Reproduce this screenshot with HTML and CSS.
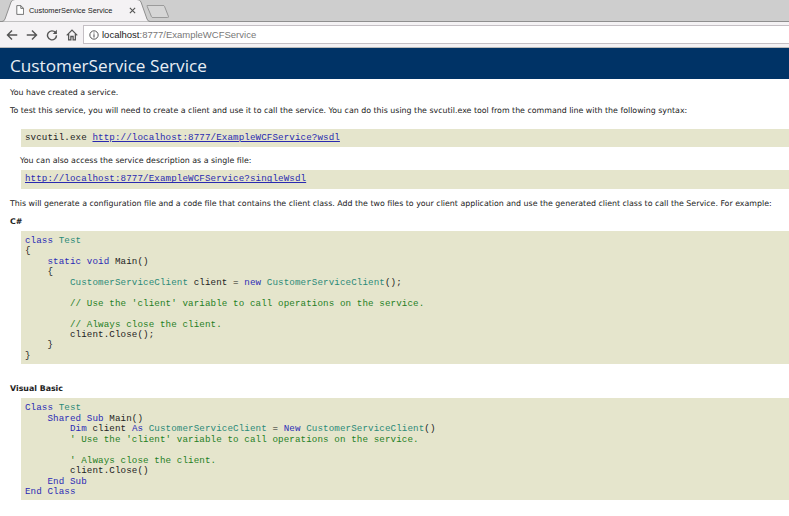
FILE: index.html
```html
<!DOCTYPE html>
<html lang="en">
<head>
  <meta charset="UTF-8">
  <meta name="viewport" content="width=device-width, initial-scale=1.0">
  <title>CustomerService Service</title>
  <link rel="stylesheet" href="styles.css">
</head>
<body>
  <!-- browser chrome -->
  <div class="tab-strip">
    <div class="tab">
      <svg class="tab-shape" width="152" height="23" viewBox="0 0 152 23">
        <path d="M0 22.5 H2 Q4 22.5 5 20 L11 3 Q12 .5 15 .5 H137 Q140 .5 141 3 L147 20 Q148 22.5 150 22.5 H152" fill="#f4f2f4" stroke="#8f8f8f"/>
      </svg>
      <svg class="tab-page" width="8" height="10" viewBox="0 0 10 12">
        <path d="M1 .5 H6 L9.5 4 V11.5 H1 Z M6 .5 V4 H9.5" fill="#fff" stroke="#555"/>
      </svg>
      <span class="tab-title">CustomerService Service</span>
      <svg class="tab-close" width="7" height="7" viewBox="0 0 8 8">
        <path d="M1 1 L7 7 M7 1 L1 7" stroke="#555" stroke-width="1.3"/>
      </svg>
    </div>
    <svg class="new-tab" width="24" height="13" viewBox="0 0 26 15">
      <path d="M.5 .5 H19 Q20 .5 20.5 1.5 L25 13 Q25.5 14.5 24 14.5 H7 Q6 14.5 5.5 13.5 L.7 2 Q.2 .5 .5 .5 Z" fill="#d6d6d6" stroke="#8c8c8c"/>
    </svg>
  </div>
  <div class="toolbar">
    <svg class="nav-icon" width="12" height="12" viewBox="0 0 16 16">
      <path d="M15 8 H3 M8 2 L2 8 L8 14" fill="none" stroke="#555" stroke-width="1.9"/>
    </svg>
    <svg class="nav-icon" width="12" height="12" viewBox="0 0 16 16">
      <path d="M1 8 H13 M8 2 L14 8 L8 14" fill="none" stroke="#555" stroke-width="1.9"/>
    </svg>
    <svg class="nav-icon" width="12" height="12" viewBox="0 0 16 16">
      <path d="M12.6 4.6 A6 6 0 1 0 14 8.5" fill="none" stroke="#555" stroke-width="1.9"/>
      <path d="M14.5 1 V6.5 H9 Z" fill="#555"/>
    </svg>
    <svg class="nav-icon" width="12" height="12" viewBox="0 0 16 16">
      <path d="M1 8.5 L8 1.5 L15 8.5 M3.5 6.5 V14.5 H6.5 V10 H9.5 V14.5 H12.5 V6.5" fill="none" stroke="#555" stroke-width="1.7"/>
    </svg>
    <div class="address-bar">
      <svg class="info-icon" width="10" height="10" viewBox="0 0 12 12">
        <circle cx="6" cy="6" r="5" fill="none" stroke="#555" stroke-width="1.2"/>
        <path d="M6 5 V9 M6 3 V4.2" stroke="#555" stroke-width="1.3"/>
      </svg>
      <span class="url-host">localhost</span><span class="url-rest">:8777/ExampleWCFService</span>
    </div>
  </div>

  <!-- service page -->
  <div class="content">
    <div class="heading">CustomerService Service</div>
    <div class="body-text">
      <p class="intro">You have created a service.</p>
      <p class="para">To test this service, you will need to create a client and use it to call the service. You can do this using the svcutil.exe tool from the command line with the following syntax:</p>
      <pre class="code-box short">svcutil.exe <a href="#">http://localhost:8777/ExampleWCFService?wsdl</a></pre>
      <p class="indented">You can also access the service description as a single file:</p>
      <pre class="code-box short"><a href="#">http://localhost:8777/ExampleWCFService?singleWsdl</a></pre>
      <p class="para generate">This will generate a configuration file and a code file that contains the client class. Add the two files to your client application and use the generated client class to call the Service. For example:</p>
      <p class="lang">C#</p>
      <pre class="code-box"><span class="kw">class</span> <span class="type">Test</span>
{
    <span class="kw">static void</span> Main()
    {
        <span class="type">CustomerServiceClient</span> client = <span class="kw">new</span> <span class="type">CustomerServiceClient</span>();

        <span class="cm">// Use the 'client' variable to call operations on the service.</span>

        <span class="cm">// Always close the client.</span>
        client.Close();
    }
}</pre>
      <p class="lang vb">Visual Basic</p>
      <pre class="code-box"><span class="kw">Class</span> <span class="type">Test</span>
    <span class="kw">Shared Sub</span> Main()
        <span class="kw">Dim</span> client <span class="kw">As</span> <span class="type">CustomerServiceClient</span> = <span class="kw">New</span> <span class="type">CustomerServiceClient</span>()
        <span class="cm">' Use the 'client' variable to call operations on the service.</span>

        <span class="cm">' Always close the client.</span>
        client.Close()
    <span class="kw">End Sub</span>
<span class="kw">End Class</span></pre>
    </div>
  </div>
</body>
</html>
```

FILE: styles.css
```css
html, body {
  margin: 0;
  padding: 0;
  height: 516px;
  overflow: hidden;
  background-color: white;
}

body {
  font-family: "DejaVu Sans", Verdana, sans-serif;
  color: #222;
}

.tab-strip {
  display: flex;
  align-items: flex-end;
  height: 22px;
  background-color: #cecece;
  border-bottom: 1px solid #8f8f8f;
  box-sizing: border-box;
}

.tab {
  position: relative;
  display: flex;
  align-items: center;
  width: 147px;
  height: 23px;
  margin-bottom: -1px;
  box-sizing: border-box;
  padding: 0 0 1px 16px;
}

.tab-shape {
  position: absolute;
  left: 0;
  top: 0;
}

.tab-page, .tab-title, .tab-close {
  position: relative;
}

.tab-title {
  margin-left: 5px;
  width: 100px;
  font-family: "Liberation Sans", Arial, sans-serif;
  font-size: 7.4px;
  white-space: nowrap;
  color: #222;
}

.new-tab {
  margin: 0 0 3px -1px;
}

.toolbar {
  display: flex;
  align-items: center;
  height: 25px;
  padding-left: 6px;
  background-color: #f4f2f4;
  border-bottom: 1px solid #bbb;
}

.nav-icon {
  margin-right: 8px;
  flex: none;
}

.address-bar {
  flex: 1;
  display: flex;
  align-items: center;
  height: 17px;
  margin-left: -3px;
  padding-left: 5px;
  background-color: white;
  border: 1px solid #c4bfc4;
  border-right: none;
  font-family: "Liberation Sans", Arial, sans-serif;
  font-size: 9.5px;
}

.info-icon {
  margin-right: 3px;
}

.url-host {
  color: #222;
}

.url-rest {
  color: #777;
}

.heading {
  height: 31px;
  line-height: 36px;
  padding-left: 10px;
  background-color: #003366;
  color: #e8eef4;
  font-family: "Open Sans", Arial, sans-serif;
  font-size: 17.2px;
  white-space: nowrap;
  overflow: hidden;
}

.body-text {
  padding-left: 10px;
  font-size: 7.87px;
  line-height: 10px;
}

.body-text p {
  margin: 0;
  white-space: nowrap;
}

.intro {
  padding-top: 9px;
}

.para {
  padding-top: 8px;
}

.indented {
  margin-left: 10px !important;
  padding-top: 9px;
}

.generate {
  padding-top: 10px;
}

.lang {
  font-weight: bold;
  padding-top: 8px;
  padding-bottom: 4px;
}

.vb {
  padding-top: 20px;
}

.code-box {
  margin: 0 0 0 11px;
  padding: 5px 0 3px 4px;
  background-color: #e5e5cc;
  font-family: "Liberation Mono", "Courier New", monospace;
  font-size: 9.2px;
  letter-spacing: 0.11px;
  line-height: 10.45px;
  color: #222;
}

.code-box.short {
  margin-top: 12.5px;
  padding: 4px 0 4px 4px;
}

.indented + .code-box.short {
  margin-top: 4.5px;
}

.code-box a {
  color: #2a2ab0;
}

.kw {
  color: #2b2bb5;
}

.type {
  color: #2b8a78;
}

.cm {
  color: #1f7f1f;
}
```
